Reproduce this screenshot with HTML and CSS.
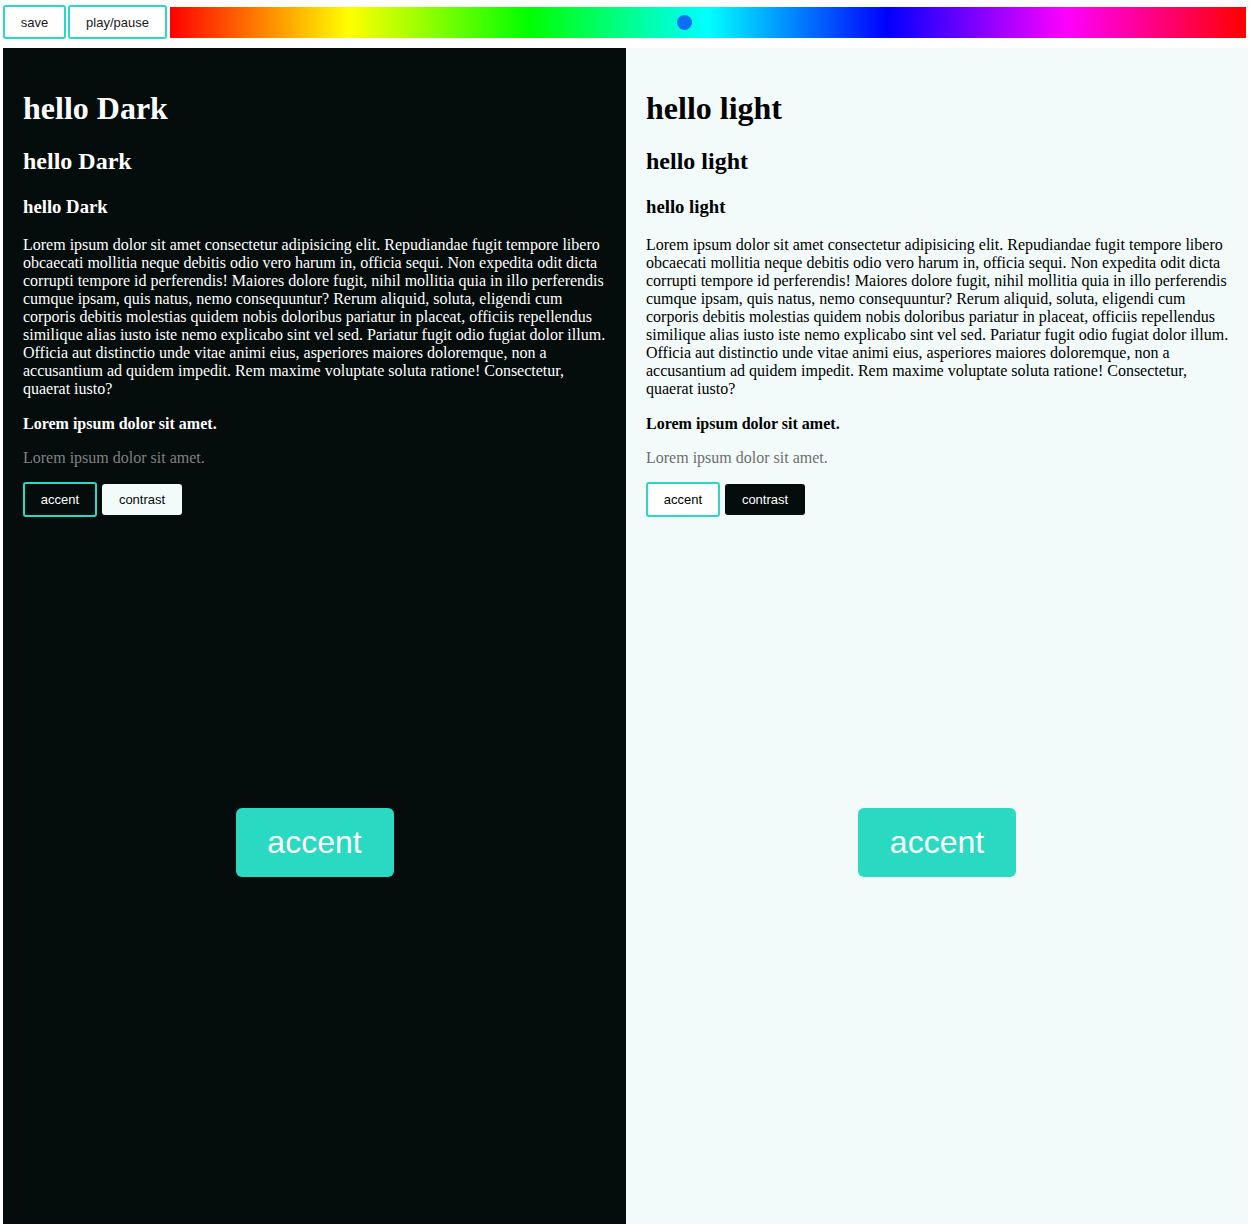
FILE: index.html
```html
<!DOCTYPE html>
<html>
<head>
<meta charset="utf-8">
<link rel="stylesheet" href="styles.css">
</head>
<body>
<div class="topbar">
  <button class="tbtn save">save</button>
  <button class="tbtn play">play/pause</button>
  <div class="hue"><span class="thumb"></span></div>
</div>
<div class="panels">
  <section class="panel dark">
    <h1>hello Dark</h1>
    <h2>hello Dark</h2>
    <h3>hello Dark</h3>
    <p>Lorem ipsum dolor sit amet consectetur adipisicing elit. Repudiandae fugit tempore libero obcaecati mollitia neque debitis odio vero harum in, officia sequi. Non expedita odit dicta corrupti tempore id perferendis! Maiores dolore fugit, nihil mollitia quia in illo perferendis cumque ipsam, quis natus, nemo consequuntur? Rerum aliquid, soluta, eligendi cum corporis debitis molestias quidem nobis doloribus pariatur in placeat, officiis repellendus similique alias iusto iste nemo explicabo sint vel sed. Pariatur fugit odio fugiat dolor illum. Officia aut distinctio unde vitae animi eius, asperiores maiores doloremque, non a accusantium ad quidem impedit. Rem maxime voluptate soluta ratione! Consectetur, quaerat iusto?</p>
    <h4>Lorem ipsum dolor sit amet.</h4>
    <p class="muted">Lorem ipsum dolor sit amet.</p>
    <div class="btns">
      <button class="b accent">accent</button>
      <button class="b contrast">contrast</button>
    </div>
    <div class="stage"><button class="big">accent</button></div>
  </section>
  <section class="panel light">
    <h1>hello light</h1>
    <h2>hello light</h2>
    <h3>hello light</h3>
    <p>Lorem ipsum dolor sit amet consectetur adipisicing elit. Repudiandae fugit tempore libero obcaecati mollitia neque debitis odio vero harum in, officia sequi. Non expedita odit dicta corrupti tempore id perferendis! Maiores dolore fugit, nihil mollitia quia in illo perferendis cumque ipsam, quis natus, nemo consequuntur? Rerum aliquid, soluta, eligendi cum corporis debitis molestias quidem nobis doloribus pariatur in placeat, officiis repellendus similique alias iusto iste nemo explicabo sint vel sed. Pariatur fugit odio fugiat dolor illum. Officia aut distinctio unde vitae animi eius, asperiores maiores doloremque, non a accusantium ad quidem impedit. Rem maxime voluptate soluta ratione! Consectetur, quaerat iusto?</p>
    <h4>Lorem ipsum dolor sit amet.</h4>
    <p class="muted">Lorem ipsum dolor sit amet.</p>
    <div class="btns">
      <button class="b accent">accent</button>
      <button class="b contrast">contrast</button>
    </div>
    <div class="stage"><button class="big">accent</button></div>
  </section>
</div>
</body>
</html>
```
FILE: styles.css
```css
html, body { margin: 0; padding: 0; background: #ffffff; }
body {
  padding: 5px 8px 0 3px;
  font-family: "Liberation Serif", "Times New Roman", serif;
  overflow: hidden;
  height: 1219px;
}
.topbar {
  display: flex;
  align-items: center;
  height: 34px;
}
.tbtn {
  height: 34px;
  box-sizing: border-box;
  border: 2px solid #29d9c2;
  border-radius: 3px;
  background: #ffffff;
  font-family: "Liberation Sans", Arial, sans-serif;
  font-size: 13px;
  color: #1a1a1a;
  padding: 0;
  margin: 0;
}
.save { width: 63px; margin-right: 2px; }
.play { width: 99px; margin-right: 3px; }
.hue {
  position: relative;
  flex: 0 0 1076px;
  height: 31px;
  background: linear-gradient(to right, #ff0000 0%, #ffff00 16.667%, #00ff00 33.333%, #00ffff 50%, #0000ff 66.667%, #ff00ff 83.333%, #ff0000 100%);
}
.thumb {
  position: absolute;
  left: 507px;
  top: 8px;
  width: 15px;
  height: 15px;
  border-radius: 50%;
  background: #0b6ff5;
}
.panels {
  display: grid;
  grid-template-columns: 623px 622px;
  margin-top: 9px;
  height: 1176px;
}
.panel {
  padding: 21px 20px 0 20px;
  box-sizing: border-box;
  overflow: hidden;
}
.light { padding-right: 18px; }
.light .stage { margin-right: 2px; }
.dark { background: #040c0c; color: #ffffff; }
.light { background: #f2fbfa; color: #000000; }
h1 { font-size: 32px; margin: 21px 0; }
h2 { font-size: 24px; margin: 20px 0; }
h3 { font-size: 18.72px; margin: 21px 0 18px; }
h4 { font-size: 16px; margin: 17px 0 16px; }
p { font-size: 16px; margin: 16px 0; line-height: 18px; }
.muted { color: #808080; margin-bottom: 15px; }
.light .muted { color: #6e6e6e; }
.btns {
  display: flex;
  align-items: center;
  gap: 5px;
}
.b {
  font-family: "Liberation Sans", Arial, sans-serif;
  font-size: 13px;
  border-radius: 3px;
  margin: 0;
  padding: 0;
  box-sizing: border-box;
}
.accent {
  width: 74px;
  height: 35px;
  border: 2px solid #29d9c2;
  background: transparent;
}
.dark .accent { color: #ffffff; }
.light .accent { color: #000000; background: #ffffff; }
.contrast {
  width: 80px;
  height: 31px;
  border: 0;
}
.dark .contrast { background: #f2fbfa; color: #040c0c; }
.light .contrast { background: #040c0c; color: #ffffff; }
.stage {
  display: flex;
  justify-content: center;
  padding-top: 291px;
}
.big {
  width: 158px;
  height: 69px;
  border: 0;
  border-radius: 6px;
  background: #29d9c2;
  color: #ffffff;
  font-family: "Liberation Sans", Arial, sans-serif;
  font-size: 32px;
  padding: 0;
}
```
